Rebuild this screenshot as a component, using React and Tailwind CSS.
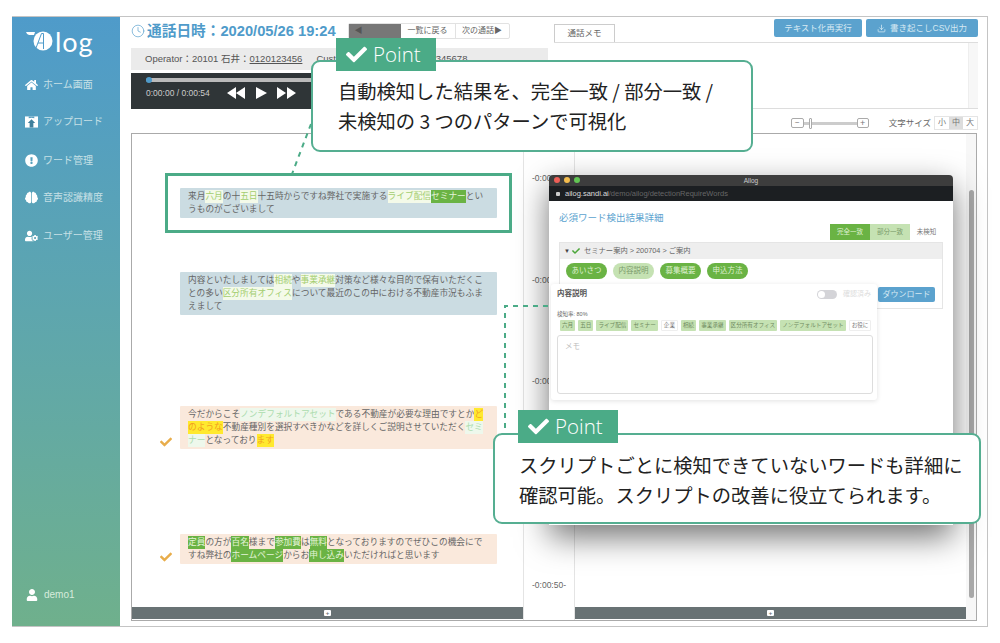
import React from 'react';
import { FaHome, FaExclamationCircle, FaBrain, FaUserCog, FaUser, FaCheck } from 'react-icons/fa';
import { FiClock, FiDownload } from 'react-icons/fi';

const partial = 'bg-[#f4fae9] text-[#a3cd6f]';
const full = 'bg-[#6ab344] text-[#e4f3d8]';
const yellow = 'bg-[#ffe92e] text-[#f3a01f]';
const pale = 'bg-[#eef8ec] text-[#acdcae]';

const UploadIcon = () => (
  <svg width="14" height="12" viewBox="0 0 14 12">
    <path d="M0 0 H14 V12 H0 Z" fill="#fff" />
    <path d="M4 0 H10 V2 L7 1.5 L4 2 Z" fill="#5a9fc0" />
    <path d="M7 3 L11 7 H9 V12 H5 V7 H3 Z" fill="#3f7f9c" />
  </svg>
);

const navItems = [
  { label: 'ホーム画面', icon: <FaHome size={14} />, cls: 'mt-[13px]' },
  { label: 'アップロード', icon: <UploadIcon />, cls: 'mt-[22px]' },
  { label: 'ワード管理', icon: <FaExclamationCircle size={13} />, cls: 'mt-[24px]' },
  { label: '音声認識精度', icon: <FaBrain size={13} />, cls: 'mt-[22px]' },
  { label: 'ユーザー管理', icon: <FaUserCog size={14} />, cls: 'mt-[23px]' },
];

const blocks = [
  {
    bg: 'bg-[#cbdce2]', cls: 'mt-[54px]', check: false,
    lines: [
      ['来月', ['六月', partial], 'の十', ['五日', partial], '十五時からですね弊社で実施する', ['ライブ配信', partial], ['セミナー', full], 'とい'],
      ['うものがございまして'],
    ],
  },
  {
    bg: 'bg-[#cbdce2]', cls: 'mt-[54px]', check: false,
    lines: [
      ['内容といたしましては', ['相続', partial], 'や', ['事業承継', partial], '対策など様々な目的で保有いただくこ'],
      ['との多い', ['区分所有オフィス', partial], 'について最近のこの中における不動産市況もふま'],
      ['えまして'],
    ],
  },
  {
    bg: 'bg-[#fae9dc]', cls: 'mt-[91px]', check: true,
    lines: [
      ['今だからこそ', ['ノンデフォルトアセット', pale], 'である不動産が必要な理由ですとか', ['ど', yellow]],
      [['のような', yellow], '不動産種別を選択すべきかなどを詳しくご説明させていただく', ['セミ', pale]],
      [['ナー', pale], 'となっており', ['ます', yellow]],
    ],
  },
  {
    bg: 'bg-[#fae9dc]', cls: 'mt-[85px]', check: true,
    lines: [
      [['定員', full], 'の方が', ['百名', full], '様まで', ['参加費', full], 'は', ['無料', full], 'となっておりますのでぜひこの機会にで'],
      ['すね弊社の', ['ホームページ', full], 'からお', ['申し込み', full], 'いただければと思います'],
    ],
  },
];

const timeLabels = [
  { t: '-0:00:10-', cls: 'mt-[38px]' },
  { t: '-0:00:20-', cls: 'mt-[90px]' },
  { t: '-0:00:30-', cls: 'mt-[89px]' },
  { t: '-0:00:40-', cls: 'mt-[90px]' },
  { t: '-0:00:50-', cls: 'mt-[90px]' },
];

const tags = [
  ['六月', true], ['五日', true], ['ライブ配信', true], ['セミナー', true], ['企業', false], ['相続', true],
  ['事業承継', true], ['区分所有オフィス', true], ['ノンデフォルトアセット', true], ['お役に', false],
];

const pills = [
  ['あいさつ', 'bg-[#6ab344] text-[#dff0d0]'],
  ['内容説明', 'bg-[#c5e2b3] text-[#7a9a6a]'],
  ['募集概要', 'bg-[#6ab344] text-[#dff0d0]'],
  ['申込方法', 'bg-[#6ab344] text-[#dff0d0]'],
];

const PlusBar = ({ w }) => (
  <div className={`${w} h-[12px] bg-[#687274] flex items-center justify-center`}>
    <span className="w-[7px] h-[6px] bg-white rounded-[1px] flex items-center justify-center text-[#687274] text-[6px] leading-none font-bold">+</span>
  </div>
);

const PointBadge = ({ cls }) => (
  <div className={`absolute ${cls} w-[100px] h-[33px] bg-[#4bab87] flex items-center pl-[10px] gap-[6px] text-white font-['Open_Sans',sans-serif] text-[20.5px] font-light`}>
    <FaCheck size={21} />
    <span>Point</span>
  </div>
);

const App = () => {
  return (
    <div className="relative w-[1000px] h-[643px] bg-white pt-[16px] pl-[12px] pr-[12px] overflow-hidden font-['Liberation_Sans','Noto_Sans_CJK_JP',sans-serif]">
      <div className="flex h-[611px] border-t border-r border-b border-[#c4c4c4]">
        {/* sidebar */}
        <div className="w-[108px] shrink-0 flex flex-col pl-[13px] bg-gradient-to-b from-[#4f9bca] to-[#6fb08c] text-white">
          <div className="flex items-start mt-[11px] h-[36px]">
            <svg width="30" height="20" viewBox="0 0 30 20" className="mt-[3px] shrink-0">
              <path d="M1 1 H10 L9 4 H4 Q2 4 1 1 Z" fill="#fff" />
              <circle cx="18" cy="10" r="9.5" fill="#fff" />
              <path d="M11 17 L16.5 2.5 H18.5 V18 M13 12 H18.5" fill="none" stroke="#4f9bca" strokeWidth="1" />
            </svg>
            <span className="font-['Lato',sans-serif] text-[27px] leading-[26px] tracking-[1px] mt-[1px] text-white">log</span>
          </div>
          {navItems.map(item => (
            <div key={item.label} className={`flex items-center gap-[5px] h-[15px] text-[10px] text-[#c6e0e6] ${item.cls}`}>
              <span className="w-[13px] flex justify-center text-white">{item.icon}</span>
              <span>{item.label}</span>
            </div>
          ))}
          <div className="mt-auto mb-[24px] flex items-center gap-[6px] text-[10px] text-[#d6ecdc] pl-[1px]">
            <FaUser size={12} className="text-white" />
            <span>demo1</span>
          </div>
        </div>

        {/* main */}
        <div className="flex-1 min-w-0 pl-[11px] pr-[9px]">
          <div className="flex h-[96px]">
            {/* left top */}
            <div className="w-[417px] shrink-0">
              <div className="flex items-center h-[28px]">
                <FiClock size={14} strokeWidth={1.2} className="text-[#5ba2ce]" />
                <span className="ml-[2px] text-[14.7px] font-bold text-[#4f9bca] whitespace-nowrap">通話日時：2020/05/26 19:24</span>
                <div className="ml-[12px] flex h-[16px] text-[8px] text-[#666] border border-[#e2e2e2] rounded-[2px]">
                  <span className="w-[52px] bg-[#777] text-[#555] pl-[6px] flex items-center">◀</span>
                  <span className="w-[55px] flex items-center justify-center border-r border-[#e2e2e2]">一覧に戻る</span>
                  <span className="w-[53px] flex items-center justify-center">次の通話▶</span>
                </div>
              </div>
              <div className="mt-[3px] h-[22px] bg-[#ebebeb] flex items-center pl-[14px] text-[9.5px] text-[#555] whitespace-nowrap">
                Operator：20101 石井：<span className="underline">0120123456</span>
                <span className="ml-[14px]">Customer：田中一郎：<span className="underline">0312345678</span></span>
              </div>
              <div className="mt-[3px] h-[36px] bg-[#2f3537] px-[15px] pt-[5px]">
                <div className="relative h-[4px] bg-[#bbb] rounded-full">
                  <span className="absolute left-0 -top-[1px] w-[6px] h-[6px] rounded-full bg-[#4f9bca]" />
                </div>
                <div className="flex items-center mt-[4px]">
                  <span className="w-[81px] text-[8.5px] text-[#ccc]">0:00:00 / 0:00:54</span>
                  <svg width="70" height="14" viewBox="0 0 70 14" fill="#fff">
                    <path d="M0 7 L9 1 V13 Z M9 7 L18 1 V13 Z" />
                    <path d="M29 1 L40 7 L29 13 Z" />
                    <path d="M50 1 L59 7 L50 13 Z M60 1 L69 7 L60 13 Z" />
                  </svg>
                </div>
              </div>
            </div>
            {/* right top */}
            <div className="ml-[6px] w-[424px] relative">
              <div className="h-[25px] flex items-end justify-between">
                <div className="w-[61px] h-[18px] border border-b-0 border-[#ccc] flex items-center justify-center text-[8.5px] text-[#666]">通話メモ</div>
                <div className="flex gap-[4px] self-start mt-[2px]">
                  <span className="w-[88px] h-[18px] rounded-[2px] bg-[#5ba2ce] flex items-center justify-center text-[8.5px] text-[#d6e9f3]">テキスト化再実行</span>
                  <span className="w-[112px] h-[18px] rounded-[2px] bg-[#5ba2ce] flex items-center justify-center gap-[4px] text-[8.5px] text-[#d6e9f3]">
                    <FiDownload size={9} />書き起こしCSV出力
                  </span>
                </div>
              </div>
              <div className="h-[67px] border-t border-b border-[#ddd] flex justify-end">
                <div className="w-[10px] bg-[#f7f7f7] border-l border-[#eee]" />
              </div>
            </div>
          </div>
          <div className="flex justify-end items-center h-[20px] ml-[6px]">
            <span className="w-[13px] h-[10px] border border-[#aaa] rounded-[2px] flex items-center justify-center text-[8px] leading-none text-[#777]">−</span>
            <div className="relative w-[53px] h-[3px] bg-[#ccc]">
              <span className="absolute left-[5px] -top-[4px] w-[3px] h-[11px] bg-white border border-[#aaa] rounded-[1px]" />
            </div>
            <span className="w-[12px] h-[10px] border border-[#aaa] rounded-[2px] flex items-center justify-center text-[9px] leading-none text-[#777]">+</span>
            <span className="ml-[20px] text-[8.5px] text-[#666]">文字サイズ</span>
            <div className="ml-[3px] flex h-[14px] border border-[#e5e5e5] text-[8px] text-[#777]">
              <span className="w-[14px] flex items-center justify-center">小</span>
              <span className="w-[14px] flex items-center justify-center bg-[#ddd]">中</span>
              <span className="w-[14px] flex items-center justify-center">大</span>
            </div>
          </div>

          {/* transcript panel */}
          <div className="w-[846px] h-[488px] border border-[#aaa] flex">
            <div className="w-[391px] shrink-0 flex flex-col">
              {blocks.map((b, i) => (
                <div key={i} className={`flex items-end pl-[28px] ${b.cls}`}>
                  <span className="w-[20px] text-[#e8ad4b] pb-[1px]">{b.check && <FaCheck size={12} />}</span>
                  <div className={`w-[317px] pl-[8px] py-[2px] rounded-[1px] text-[8.7px] leading-[13px] text-[#666] whitespace-nowrap ${b.bg}`}>
                    {b.lines.map((line, j) => (
                      <div key={j}>
                        {line.map((part, k) => (typeof part === 'string'
                          ? <span key={k}>{part}</span>
                          : <span key={k} className={`inline-block ${part[1]}`}>{part[0]}</span>))}
                      </div>
                    ))}
                  </div>
                </div>
              ))}
              <div className="mt-auto mb-[1px]"><PlusBar w="w-full" /></div>
            </div>
            <div className="w-[52px] shrink-0 border-l border-r border-[#e4e4e4] flex flex-col items-center text-[8.5px] text-[#666]">
              {timeLabels.map(l => (
                <span key={l.t} className={`h-[12px] leading-[12px] ${l.cls}`}>{l.t}</span>
              ))}
            </div>
            <div className="w-[391px] shrink-0 flex flex-col">
              <div className="mt-auto mb-[1px]"><PlusBar w="w-full" /></div>
            </div>
            <div className="flex-1 bg-[#f7f7f7] pl-[3px] pr-[2px] pt-[56px] pb-[22px]">
              <div className="h-full rounded-full bg-[#a8a8a8]" />
            </div>
          </div>
        </div>
      </div>

      {/* popup window */}
      <div className="absolute left-[549px] top-[175px] w-[404px] h-[350px] bg-white rounded-t-[4px] shadow-[0_12px_32px_rgba(0,0,0,0.55)]">
        <div className="h-[11px] bg-[#3d3d3d] rounded-t-[4px] relative flex items-center justify-center text-[6.5px] text-[#ccc]">
          <span>Allog</span>
          <span className="absolute left-[5px] top-[2px] flex gap-[4px]">
            <span className="w-[6px] h-[6px] rounded-full bg-[#ee5f57]" />
            <span className="w-[6px] h-[6px] rounded-full bg-[#f4bd4e]" />
            <span className="w-[6px] h-[6px] rounded-full bg-[#62c554]" />
          </span>
        </div>
        <div className="h-[15px] bg-[#1c1f22] flex items-center pl-[7px] text-[7.5px] text-[#666]">
          <span className="w-[4px] h-[4px] bg-[#ccc] mr-[5px] rounded-[1px]" />
          <span className="text-[#ddd]">ailog.sandi.ai</span>/demo/ailog/detectionRequireWords
        </div>
        <div className="px-[10px] pt-[11px]">
          <div className="text-[9.5px] leading-[12px] text-[#5ba3cf]">必須ワード検出結果詳細</div>
          <div className="flex justify-end text-[6.5px]">
            <span className="w-[40px] h-[16px] bg-[#6ab344] text-[#dff0d0] flex items-center justify-center">完全一致</span>
            <span className="w-[40px] h-[16px] bg-[#c5e2b3] text-[#7a9a6a] flex items-center justify-center">部分一致</span>
            <span className="w-[33px] h-[16px] bg-white text-[#777] flex items-center justify-center">未検知</span>
          </div>
          <div className="mt-[2px] h-[67px] border border-[#e5e5e5] relative">
            <div className="h-[16px] bg-[#eee] flex items-center pl-[4px] gap-[2px] text-[7.3px] text-[#666]">
              <span className="text-[6px] text-[#444]">▼</span>
              <FaCheck size={8} className="text-[#4ca63a]" />
              <span className="ml-[2px]">セミナー案内 &gt; 200704 &gt; ご案内</span>
            </div>
            <div className="flex gap-[6px] pl-[6px] mt-[4px]">
              {pills.map(p => (
                <span key={p[0]} className={`w-[41px] h-[16px] rounded-full flex items-center justify-center text-[7.5px] ${p[1]}`}>{p[0]}</span>
              ))}
            </div>
            <span className="absolute right-[7px] bottom-[6px] w-[57px] h-[15px] rounded-[2px] bg-[#5ba2ce] text-[#d6e9f3] text-[8px] flex items-center justify-center">ダウンロード</span>
          </div>
        </div>
        {/* inner card */}
        <div className="absolute left-[2px] top-[109px] w-[326px] h-[116px] bg-white rounded-[3px] shadow-[0_1px_5px_rgba(0,0,0,0.12)] px-[6px] pt-[5px]">
          <div className="flex items-center h-[10px] text-[7.5px] text-[#555]">
            <span className="font-bold">内容説明</span>
            <span className="ml-auto w-[20px] h-[9px] rounded-full bg-[#d4d4d8] relative">
              <span className="absolute left-[1px] top-[1px] w-[7px] h-[7px] rounded-full bg-white" />
            </span>
            <span className="ml-[6px] w-[28px] text-[7px] text-[#ddd]">確認済み</span>
          </div>
          <div className="mt-[12px] text-[5.5px] leading-[7px] text-[#666]">検知率: 80%</div>
          <div className="flex gap-[3px] mt-[2px] ml-[3px] whitespace-nowrap">
            {tags.map(t => (
              <span key={t[0]} className={`h-[11px] px-[2px] rounded-[1px] flex items-center text-[5.6px] ${t[1] ? 'bg-[#c5e2b3] text-[#6f8a60]' : 'bg-white border border-[#eee] text-[#777]'}`}>{t[0]}</span>
            ))}
          </div>
          <div className="mt-[4px] w-[316px] h-[59px] border border-[#ddd] rounded-[3px] pl-[7px] pt-[5px] text-[7.5px] text-[#bbb]">メモ</div>
        </div>
      </div>

      {/* annotation: dashed leaders and highlight */}
      <svg className="absolute left-0 top-0 pointer-events-none" width="1000" height="643" fill="none" stroke="#4bab87" strokeWidth="2" strokeDasharray="5 5">
        <path d="M311 124 L292 174" />
        <path d="M548 306 H505 V434" />
      </svg>
      <div className="absolute left-[165px] top-[173px] w-[347px] h-[60px] border-[3px] border-[#4bab87]" />

      {/* callouts */}
      <div className="absolute left-[311px] top-[60px] w-[442px] h-[92px] bg-white border-2 border-[#55ae91] rounded-[9px] pl-[25px] pt-[14px] font-['Noto_Sans_CJK_JP',sans-serif] text-[19.3px] leading-[30px] text-[#222] whitespace-nowrap">
        <div>自動検知した結果を、完全一致 / 部分一致 /</div>
        <div>未検知の 3 つのパターンで可視化</div>
      </div>
      <PointBadge cls="left-[336px] top-[38px]" />
      <div className="absolute left-[493px] top-[433px] w-[488px] h-[91px] bg-white border-2 border-[#55ae91] rounded-[9px] pl-[24px] pt-[15px] font-['Noto_Sans_CJK_JP',sans-serif] text-[19.3px] leading-[30px] text-[#222] whitespace-nowrap">
        <div>スクリプトごとに検知できていないワードも詳細に</div>
        <div>確認可能。スクリプトの改善に役立てられます。</div>
      </div>
      <PointBadge cls="left-[518px] top-[410px]" />
    </div>
  );
};

export default App;
